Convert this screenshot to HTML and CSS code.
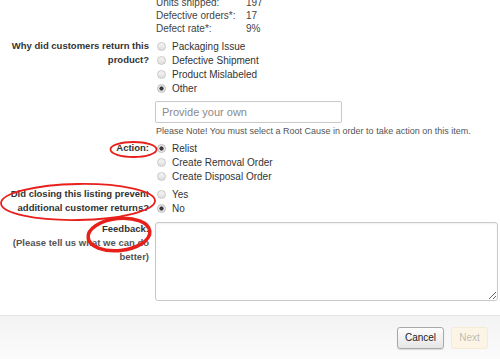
FILE: index.html
```html
<!DOCTYPE html>
<html lang="en">
<head>
  <meta charset="UTF-8" />
  <meta name="viewport" content="width=device-width, initial-scale=1.0"/>
  <title>Close Listing</title>
  <link rel="stylesheet" href="styles.css">
</head>
<body>
  <div class="page">
    <div class="form">
      <div class="row stats-row">
        <div class="label"></div>
        <div class="value">
          <div class="stats">
            <span>Units shipped:</span><span>197</span>
            <span>Defective orders*:</span><span>17</span>
            <span>Defect rate*:</span><span>9%</span>
          </div>
        </div>
      </div>

      <div class="row">
        <div class="label">Why did customers return this<br>product?</div>
        <div class="value">
          <label class="choice"><input type="radio" name="cause"><span>Packaging Issue</span></label>
          <label class="choice"><input type="radio" name="cause"><span>Defective Shipment</span></label>
          <label class="choice"><input type="radio" name="cause"><span>Product Mislabeled</span></label>
          <label class="choice"><input type="radio" name="cause" checked><span>Other</span></label>
          <input class="own" type="text" placeholder="Provide your own">
          <div class="note">Please Note! You must select a Root Cause in order to take action on this item.</div>
        </div>
      </div>

      <div class="row action-row">
        <div class="label">Action:</div>
        <div class="value">
          <label class="choice"><input type="radio" name="action" checked><span>Relist</span></label>
          <label class="choice"><input type="radio" name="action"><span>Create Removal Order</span></label>
          <label class="choice"><input type="radio" name="action"><span>Create Disposal Order</span></label>
        </div>
      </div>

      <div class="row prevent-row">
        <div class="label">Did closing this listing prevent<br>additional customer returns?</div>
        <div class="value">
          <label class="choice"><input type="radio" name="prevent"><span>Yes</span></label>
          <label class="choice"><input type="radio" name="prevent" checked><span>No</span></label>
        </div>
      </div>

      <div class="row feedback-row">
        <div class="label">Feedback:<br><span class="hint">(Please tell us what we can do<br>better)</span></div>
        <div class="value">
          <textarea class="feedback"></textarea>
        </div>
      </div>
    </div>

    <div class="footer">
      <button class="btn cancel">Cancel</button>
      <button class="btn next" disabled>Next</button>
    </div>

    <svg class="marks" width="500" height="359" viewBox="0 0 500 359">
      <ellipse cx="133.5" cy="149.5" rx="23" ry="7.5" fill="none" stroke="#e8201c" stroke-width="1.8"/>
      <ellipse cx="78" cy="202" rx="77" ry="18" fill="none" stroke="#e8201c" stroke-width="1.8" transform="rotate(-1 78 202)"/>
      <ellipse cx="119" cy="234.5" rx="31" ry="16" fill="none" stroke="#e8201c" stroke-width="3.5" transform="rotate(-6 119 234.5)"/>
    </svg>
  </div>
</body>
</html>
```

FILE: styles.css
```css
body {
  margin: 0;
  font-family: "Liberation Sans", Arial, sans-serif;
  font-size: 10px;
  color: #333;
  background: #fff;
  overflow: hidden;
}
.page {
  position: relative;
  width: 500px;
  height: 359px;
  overflow: hidden;
}
.form {
  padding-right: 2px;
}
.row {
  display: grid;
  grid-template-columns: 149px 1fr;
  column-gap: 6px;
  margin-top: 4px;
}
.stats-row {
  margin-top: -4px;
}
.action-row {
  margin-top: 3px;
}
.feedback-row {
  margin-top: 7px;
}
.label {
  text-align: right;
  font-weight: bold;
  font-size: 9.5px;
  line-height: 14px;
  color: #333;
}
.hint {
  color: #555;
}
.value {
  display: flex;
  flex-direction: column;
  align-items: flex-start;
}
.stats {
  display: grid;
  grid-template-columns: 90px auto;
  line-height: 13px;
  padding-left: 1px;
  color: #444;
}
.choice {
  display: flex;
  align-items: center;
  gap: 6px;
  height: 14px;
  padding-left: 2px;
  color: #333;
}
.choice input {
  appearance: none;
  -webkit-appearance: none;
  width: 9px;
  height: 9px;
  margin: 0;
  border-radius: 50%;
  border: 1px solid #c8c8c8;
  background: linear-gradient(#f6f6f6, #dedede);
  box-sizing: border-box;
}
.choice input:checked {
  background: radial-gradient(circle, #3a3a3a 0, #3a3a3a 1.8px, #eaeaea 2.4px);
  border-color: #bdbdbd;
}
.own {
  margin-top: 6px;
  width: 187px;
  height: 22px;
  box-sizing: border-box;
  border: 1px solid #c9c9c9;
  border-radius: 2px;
  padding: 0 6px;
  font-family: inherit;
  font-size: 11px;
  color: #333;
}
.own::placeholder {
  color: #8a8a8a;
}
.note {
  margin-top: 1px;
  font-size: 9px;
  line-height: 14px;
  color: #555;
  padding-left: 1px;
}
.feedback {
  width: 343px;
  height: 79px;
  box-sizing: border-box;
  border: 1px solid #c9c9c9;
  border-radius: 3px;
  box-shadow: inset 0 1px 2px rgba(0,0,0,0.06);
  margin: 0;
  font-family: inherit;
}
.footer {
  margin-top: 14px;
  height: 44px;
  box-sizing: border-box;
  border-top: 1px solid #e4e4e4;
  background: linear-gradient(#f3f3f3, #fbfbfb);
  display: flex;
  justify-content: flex-end;
  align-items: center;
  gap: 7px;
  padding-right: 12px;
}
.btn {
  height: 22px;
  padding: 0;
  font-family: inherit;
  font-size: 10px;
  border-radius: 3px;
  box-sizing: border-box;
}
.cancel {
  width: 47px;
  color: #222;
  border: 1px solid #a9a9a9;
  background: linear-gradient(#fdfdfd, #e6e6e6);
  box-shadow: 0 1px 1px rgba(0,0,0,0.12);
}
.next {
  width: 37px;
  color: #c2bcb2;
  border: 1px solid #f4ead6;
  background: #fcf5e6;
}
.marks {
  position: absolute;
  top: 0;
  left: 0;
  pointer-events: none;
}
```
